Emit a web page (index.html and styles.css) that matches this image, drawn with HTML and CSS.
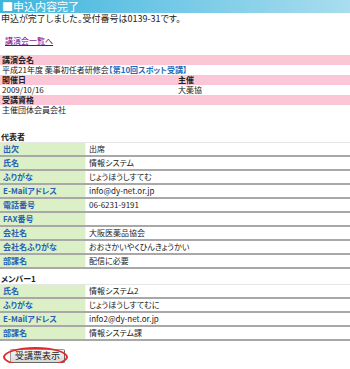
FILE: index.html
```html
<!DOCTYPE html>
<html lang="ja">
<head>
<meta charset="UTF-8" />
<title>申込内容完了</title>
<link rel="stylesheet" href="styles.css">
</head>
<body>

<div class="title">■申込内容完了</div>
<p class="msg">申込が完了しました。受付番号は0139-31です。</p>
<p class="back"><a href="#">講演会一覧へ</a></p>

<div class="info">
  <div class="head">講演会名</div>
  <div class="val">平成21年度 薬事初任者研修会<span class="spot">【第10回スポット受講】</span></div>
  <div class="head pair"><span>開催日</span><span>主催</span></div>
  <div class="val pair"><span>2009/10/16</span><span>大薬協</span></div>
  <div class="head">受講資格</div>
  <div class="val">主催団体会員会社</div>
</div>

<h3 class="first">代表者</h3>
<div class="entry">
  <div class="row"><span class="key">出欠</span><span>出席</span></div>
  <div class="row"><span class="key">氏名</span><span>情報システム</span></div>
  <div class="row"><span class="key">ふりがな</span><span>じょうほうしすてむ</span></div>
  <div class="row"><span class="key">E-Mailアドレス</span><span>info@dy-net.or.jp</span></div>
  <div class="row"><span class="key">電話番号</span><span>06-6231-9191</span></div>
  <div class="row"><span class="key">FAX番号</span><span></span></div>
  <div class="row"><span class="key">会社名</span><span>大阪医薬品協会</span></div>
  <div class="row"><span class="key">会社名ふりがな</span><span>おおさかいやくひんきょうかい</span></div>
  <div class="row"><span class="key">部課名</span><span>配信に必要</span></div>
</div>

<h3>メンバー1</h3>
<div class="entry">
  <div class="row"><span class="key">氏名</span><span>情報システム2</span></div>
  <div class="row"><span class="key">ふりがな</span><span>じょうほうしすてむに</span></div>
  <div class="row"><span class="key">E-Mailアドレス</span><span>info2@dy-net.or.jp</span></div>
  <div class="row"><span class="key">部課名</span><span>情報システム課</span></div>
</div>

<div class="actions">
  <button type="button">受講票表示</button>
</div>

</body>
</html>
```

FILE: styles.css
```css
body {
  margin: 0;
  font-family: "Noto Sans CJK JP", "Liberation Sans", sans-serif;
  font-size: 8px;
  font-feature-settings: "palt";
  color: #222;
  background: #fff;
}
.title {
  height: 13px;
  line-height: 13px;
  padding-left: 2px;
  font-size: 11px;
  color: #fff;
  background: linear-gradient(to right, #3fb5de, #a9ddef);
}
.msg {
  margin: 0 0 0 1px;
  font-size: 9px;
  line-height: 11px;
}
.back {
  margin: 11px 0 0 5px;
  line-height: 11px;
}
.back a {
  color: #800080;
}
.info {
  margin-top: 9px;
}
.info .head,
.info .val {
  height: 10px;
  line-height: 10px;
  padding-left: 2px;
  overflow: hidden;
}
.info .head {
  background: #fbc7d7;
  font-weight: bold;
}
.pair {
  display: grid;
  grid-template-columns: 176px 1fr;
}
.spot {
  color: #1a6fc0;
  font-weight: bold;
}
h3 {
  margin: 5px 0 0 1px;
  height: 10px;
  font-size: 8px;
  line-height: 10px;
}
h3.first {
  margin-top: 17px;
}
.entry {
  border-top: 1px solid #e6e6e6;
}
.row {
  display: grid;
  grid-template-columns: 86px 1fr;
  height: 12px;
  line-height: 12px;
  border-bottom: 2px solid #a8a8a8;
}
.row span {
  padding-left: 3px;
  overflow: hidden;
  white-space: nowrap;
}
.row .key {
  background: #dbf0c6;
  color: #2a5fb8;
  font-weight: bold;
  border-right: 1px solid #f4f4f4;
}
.actions {
  position: relative;
  width: 66px;
  padding: 8px 0 0 10px;
}
.actions::after {
  content: "";
  position: absolute;
  left: 3px;
  top: 6px;
  width: 61px;
  height: 16px;
  border: 2px solid #e02828;
  border-radius: 50%;
}
.actions button {
  display: block;
  font: inherit;
  font-size: 9px;
  line-height: 10px;
  padding: 1px 4px;
  color: #222;
  background: linear-gradient(#f6f6f6, #d8d8d8);
  border: 1px solid #999;
  border-right-color: #666;
  border-bottom-color: #666;
  border-radius: 2px;
}
```
